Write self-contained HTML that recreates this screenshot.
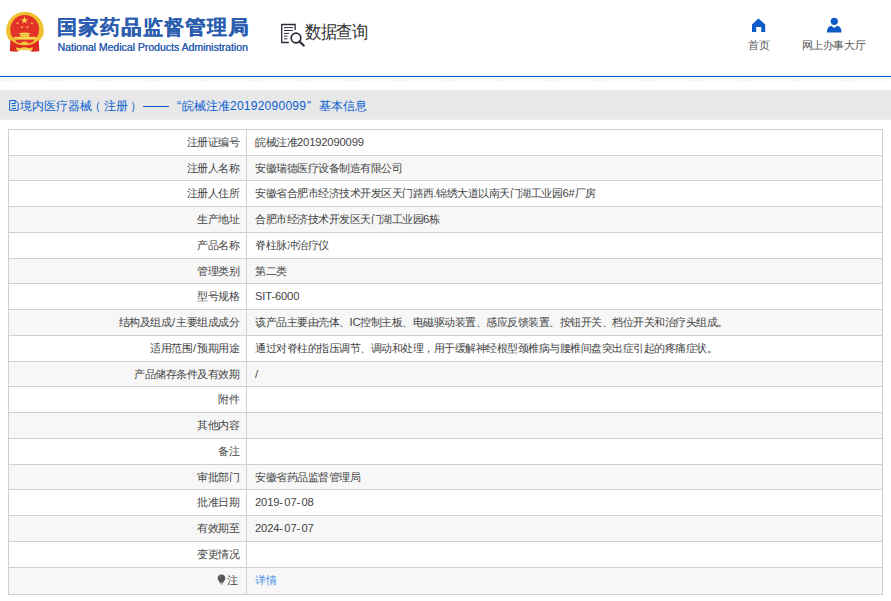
<!DOCTYPE html>
<html><head><meta charset="utf-8">
<style>
html,body{margin:0;padding:0;background:#fff;width:891px;height:601px;overflow:hidden;font-family:"Liberation Sans",sans-serif;}
.abs{position:absolute;white-space:nowrap;}
#emblem{left:0;top:0;width:60px;height:60px;}
#title{left:57px;top:12.5px;font-size:20px;font-weight:bold;color:#2b5daf;line-height:28px;letter-spacing:1.4px;text-shadow:0.35px 0.15px 0 #2b5daf;}
#sub{left:57.5px;top:41px;font-size:10.48px;color:#2d60b4;line-height:13px;text-shadow:0.2px 0 0 #2d60b4;}
#dq{left:276px;top:18px;width:34px;height:32px;}
#dqt{left:305px;top:19px;font-size:16px;color:#333;line-height:26px;letter-spacing:-0.35px;transform:scaleY(1.1);transform-origin:0 5px;}
#home{left:740px;top:10px;width:30px;height:30px;}
#homet{left:748px;top:37.5px;font-size:11px;color:#555;line-height:15px;letter-spacing:0.2px;}
#user{left:820px;top:10px;width:30px;height:30px;}
#usert{left:801.5px;top:37.5px;font-size:11px;color:#555;line-height:15px;letter-spacing:-0.4px;}
#bline{left:0;top:76px;width:891px;height:1px;background:#035cc5;}
#stripes{left:0;top:77px;width:891px;height:4px;background:repeating-linear-gradient(-45deg,#fff 0px,#fff 1.7px,#e4e4e4 1.7px,#e4e4e4 2.62px);}
#bar{left:0;top:90px;width:891px;height:29px;background:#e8e8e8;border-bottom:1px solid #eceef2;}
.bt{top:92px;font-size:12px;color:#0a5fd0;line-height:29px;}
#tbl{position:absolute;left:0;top:0;width:891px;height:601px;}
#tbl .row{position:absolute;left:8px;width:875px;box-sizing:border-box;border:1px solid #d0cfd1;background:#fff;font-size:11.2px;color:#444;white-space:nowrap;letter-spacing:-0.5px;}
#tbl .row.even{background:#f7f7f7;}
#tbl .l{position:absolute;right:643px;top:0;text-align:right;line-height:24px;}
#tbl .v{position:absolute;left:246px;top:0;line-height:24px;}
#tbl .vdiv{position:absolute;left:246px;top:129px;width:1px;height:465px;background:#d0cfd1;}
#tbl .n{letter-spacing:-0.15px;}
#tbl .hy{letter-spacing:1.3px;}
.j{display:inline-block;text-align:justify;text-align-last:justify;white-space:nowrap;}
#tbl .sl{margin-left:0.9px;letter-spacing:0.8px;}
</style></head><body>
<svg id="emblem" class="abs" viewBox="0 0 60 60">
  <path d="M10.6 37 L9.8 51.3 L17.2 51.8 L20 49.6 L29 49.6 L31.8 51.8 L39.3 51.2 L38.6 37 Z" fill="#dc2a1f"></path>
  <path d="M6.5 34 A18.8 18.8 0 1 1 43.5 34 Q42 38 39 41 L10 41 Q7.5 38 6.5 34 Z" fill="#f0c12f"></path>
  <circle cx="24.7" cy="29.4" r="14.4" fill="#e3322a"></circle>
  <path d="M10.5 40 Q24.5 46 38.6 40 L38 43 Q24.5 48 11 43 Z" fill="#e3322a"></path>
  <g fill="#f6d44c">
    <polygon points="24.5,16.6 25.4,19.3 28.2,19.3 26,21 26.8,23.6 24.5,22 22.2,23.6 23,21 20.8,19.3 23.6,19.3"></polygon>
    <polygon points="17.5,21.8 17.9,22.7 18.9,22.8 18.1,23.4 18.4,24.4 17.5,23.8 16.6,24.4 16.9,23.4 16.1,22.8 17.1,22.7"></polygon>
    <polygon points="32,21.8 32.4,22.7 33.4,22.8 32.6,23.4 32.9,24.4 32,23.8 31.1,24.4 31.4,23.4 30.6,22.8 31.6,22.7"></polygon>
    <polygon points="22,25.8 22.4,26.7 23.4,26.8 22.6,27.4 22.9,28.4 22,27.8 21.1,28.4 21.4,27.4 20.6,26.8 21.6,26.7"></polygon>
    <polygon points="27.5,25.8 27.9,26.7 28.9,26.8 28.1,27.4 28.4,28.4 27.5,27.8 26.6,28.4 26.9,27.4 26.1,26.8 27.1,26.7"></polygon>
    <path d="M18.8 33.6 Q24.6 31.6 30.4 33.6 L30.4 34.2 L19 34.2 Z"></path>
    <rect x="20.3" y="34.2" width="8.8" height="2.6"></rect>
    <rect x="13.8" y="36.8" width="22.4" height="2.8"></rect>
  </g>
  <path d="M10.8 38.6 Q17.5 45.6 24.5 44 Q31.5 45.6 38.4 38.6" fill="none" stroke="#f3c83a" stroke-width="1.5"></path>
  <ellipse cx="24.5" cy="43.4" rx="3.4" ry="1.8" fill="#f3c83a"></ellipse>
  <path d="M16 47.3 L19.6 48.3 Q24.5 46.4 29.4 48.3 L32.9 47.3 L32 50.8 L29.5 50.2 Q24.5 49.6 19.5 50.2 L16.9 50.8 Z" fill="#f3cf45"></path>
</svg>
<div id="title" class="abs"><span class="j" style="width: 192.61px;">国家药品监督管理局</span></div>
<div id="sub" class="abs">National Medical Products Administration</div>
<svg id="dq" class="abs" viewBox="0 0 34 32" fill="none" stroke="#2a2a3a">
  <path d="M12.8 24.5 H5.7 V6.5 H19.1 V12" stroke-width="1.3"></path>
  <path d="M8 9.6 H16.8 M8 12.5 H16.8 M8 15.4 H13 M8 18.1 H11.4 M8 20.8 H11.4" stroke-width="1"></path>
  <circle cx="20" cy="20" r="4.8" stroke-width="1.7"></circle>
  <path d="M23.5 23.5 L27.7 27.5" stroke-width="2.2" stroke-linecap="round"></path>
</svg>
<div id="dqt" class="abs"><span class="j" style="width: 62.61px;">数据查询</span></div>
<svg id="home" class="abs" viewBox="740 10 30 30"><path d="M752 24.5 L758.5 18.6 L765.2 24.5 L765.2 32 L761.2 32 L761.2 27 L756.2 27 L756.2 32 L752 32 Z" fill="#0c5bc8"></path></svg>
<div id="homet" class="abs"><span class="j" style="width: 22.41px;">首页</span></div>
<svg id="user" class="abs" viewBox="820 10 30 30"><circle cx="834.3" cy="21.3" r="3.6" fill="#0c5bc8"></circle><path d="M826.9 32.4 Q827 26.5 831.3 25.7 L834.2 28 L837.1 25.7 Q841.5 26.5 841.5 32.4 Z" fill="#0c5bc8"></path></svg>
<div id="usert" class="abs"><span class="j" style="width: 63.61px;">网上办事大厅</span></div>
<div id="bline" class="abs"></div>
<svg class="abs" style="left:0;top:77px" width="891" height="4"><defs><pattern id="st" patternUnits="userSpaceOnUse" width="3.7" height="4"><path d="M-3.7 4 L0.3 0 M0 4 L4 0 M3.7 4 L7.7 0" stroke="#dedede" stroke-width="0.75"></path></pattern></defs><rect width="891" height="4" fill="url(#st)"></rect></svg>
<div id="bar" class="abs"></div>
<svg class="abs" style="left:8px;top:99px;width:12px;height:13px" viewBox="8 99 12 13" fill="none" stroke="#0a5fd0" stroke-width="1">
  <path d="M9.6 100.5 H15.4 L18.2 103.3 V110.3 H9.6 Z"></path><path d="M11.4 103.5 H15.2 V100.8 M11.6 105.7 H16 M11.6 108.4 H16"></path>
</svg>
<div class="abs bt" style="left:20px"><span class="j" style="width: 72px;">境内医疗器械</span></div>
<div class="abs bt" style="left:89px"><span class="j" style="width: 12px;">（</span></div>
<div class="abs bt" style="left:104px"><span class="j" style="width: 24px;">注册</span></div>
<div class="abs bt" style="left:130px"><span class="j" style="width: 12px;">）</span></div>
<div class="abs" style="left:143px;top:106px;width:26px;height:1px;background:#0a5fd0"></div>
<div class="abs bt" style="left:177px">“</div>
<div class="abs bt" style="left:182px"><span class="j" style="width: 48px;">皖械注准</span></div>
<div class="abs bt" style="left:230px;letter-spacing:0.25px">20192090099</div>
<div class="abs bt" style="left:307px">”</div>
<div class="abs bt" style="left:319px"><span class="j" style="width: 48px;">基本信息</span></div>
<div id="tbl">
<div class="row" style="top:129px;height:27px"><div class="l"><span class="j" style="width: 52.5px;">注册证编号</span></div><div class="v"><span class="j" style="width: 108.8px;">皖械注准<span class="n">20192090099</span></span></div></div>
<div class="row even" style="top:155px;height:26px"><div class="l"><span class="j" style="width: 52.5px;">注册人名称</span></div><div class="v"><span class="j" style="width: 147px;">安徽瑞德医疗设备制造有限公司</span></div></div>
<div class="row" style="top:180px;height:27px"><div class="l"><span class="j" style="width: 52.5px;">注册人住所</span></div><div class="v"><span class="j" style="width: 340.63px;">安徽省合肥市经济技术开发区天门路西<span class="n">.</span>锦绣大道以南天门湖工业园<span class="n">6#</span>厂房</span></div></div>
<div class="row even" style="top:206px;height:27px"><div class="l"><span class="j" style="width: 42px;">生产地址</span></div><div class="v"><span class="j" style="width: 184.58px;">合肥市经济技术开发区天门湖工业园<span class="n">6</span>栋</span></div></div>
<div class="row" style="top:232px;height:27px"><div class="l"><span class="j" style="width: 42px;">产品名称</span></div><div class="v"><span class="j" style="width: 73.5px;">脊柱脉冲治疗仪</span></div></div>
<div class="row even" style="top:258px;height:26px"><div class="l"><span class="j" style="width: 42px;">管理类别</span></div><div class="v"><span class="j" style="width: 31.5px;">第二类</span></div></div>
<div class="row" style="top:283px;height:27px"><div class="l"><span class="j" style="width: 42px;">型号规格</span></div><div class="v"><span class="n">SIT-6000</span></div></div>
<div class="row even" style="top:309px;height:27px"><div class="l"><span class="j" style="width: 120.32px;">结构及组成<span class="sl">/</span>主要组成成分</span></div><div class="v"><span class="j" style="width: 472.9px;">该产品主要由壳体、<span class="n">IC</span>控制主板、电磁驱动装置、感应反馈装置、按钮开关、档位开关和治疗头组成。</span></div></div>
<div class="row" style="top:335px;height:27px"><div class="l"><span class="j" style="width: 88.82px;">适用范围<span class="sl">/</span>预期用途</span></div><div class="v"><span class="j" style="width: 462px;">通过对脊柱的指压调节、调动和处理，用于缓解神经根型颈椎病与腰椎间盘突出症引起的疼痛症状。</span></div></div>
<div class="row even" style="top:361px;height:26px"><div class="l"><span class="j" style="width: 105px;">产品储存条件及有效期</span></div><div class="v">/</div></div>
<div class="row" style="top:386px;height:27px"><div class="l"><span class="j" style="width: 21px;">附件</span></div><div class="v"></div></div>
<div class="row even" style="top:412px;height:27px"><div class="l"><span class="j" style="width: 42px;">其他内容</span></div><div class="v"></div></div>
<div class="row" style="top:438px;height:27px"><div class="l"><span class="j" style="width: 21px;">备注</span></div><div class="v"></div></div>
<div class="row even" style="top:464px;height:26px"><div class="l"><span class="j" style="width: 42px;">审批部门</span></div><div class="v"><span class="j" style="width: 105px;">安徽省药品监督管理局</span></div></div>
<div class="row" style="top:489px;height:27px"><div class="l"><span class="j" style="width: 42px;">批准日期</span></div><div class="v"><span class="n">2019<span class="hy">-</span>07<span class="hy">-</span>08</span></div></div>
<div class="row even" style="top:515px;height:27px"><div class="l"><span class="j" style="width: 42px;">有效期至</span></div><div class="v"><span class="n">2024<span class="hy">-</span>07<span class="hy">-</span>07</span></div></div>
<div class="row" style="top:541px;height:27px"><div class="l"><span class="j" style="width: 42px;">变更情况</span></div><div class="v"></div></div>
<div class="row even" style="top:567px;height:28px"><div class="l"><span class="j" style="width: 20.5px;"><span style="position:relative;top:0px;left:-2px"><svg width="9" height="11" viewBox="0 0 9 11" style="vertical-align:-1px;margin-right:1px"><path d="M4.5 0.4 C7 0.4 8.3 2.2 8.3 4.2 C8.3 6.2 6.6 7.1 6.2 8.7 H2.8 C2.4 7.1 0.7 6.2 0.7 4.2 C0.7 2.2 2 0.4 4.5 0.4 Z" fill="#555"></path><rect x="3" y="9.1" width="3" height="1.4" fill="#aaa"></rect><path d="M2.4 3.6 Q2.6 2.2 4 1.9" stroke="#999" stroke-width="0.7" fill="none"></path></svg>注</span></span></div><div class="v" style="color:#4a90e8"><span class="j" style="width: 21px;">详情</span></div></div>
<div class="vdiv"></div></div>

</body></html>
